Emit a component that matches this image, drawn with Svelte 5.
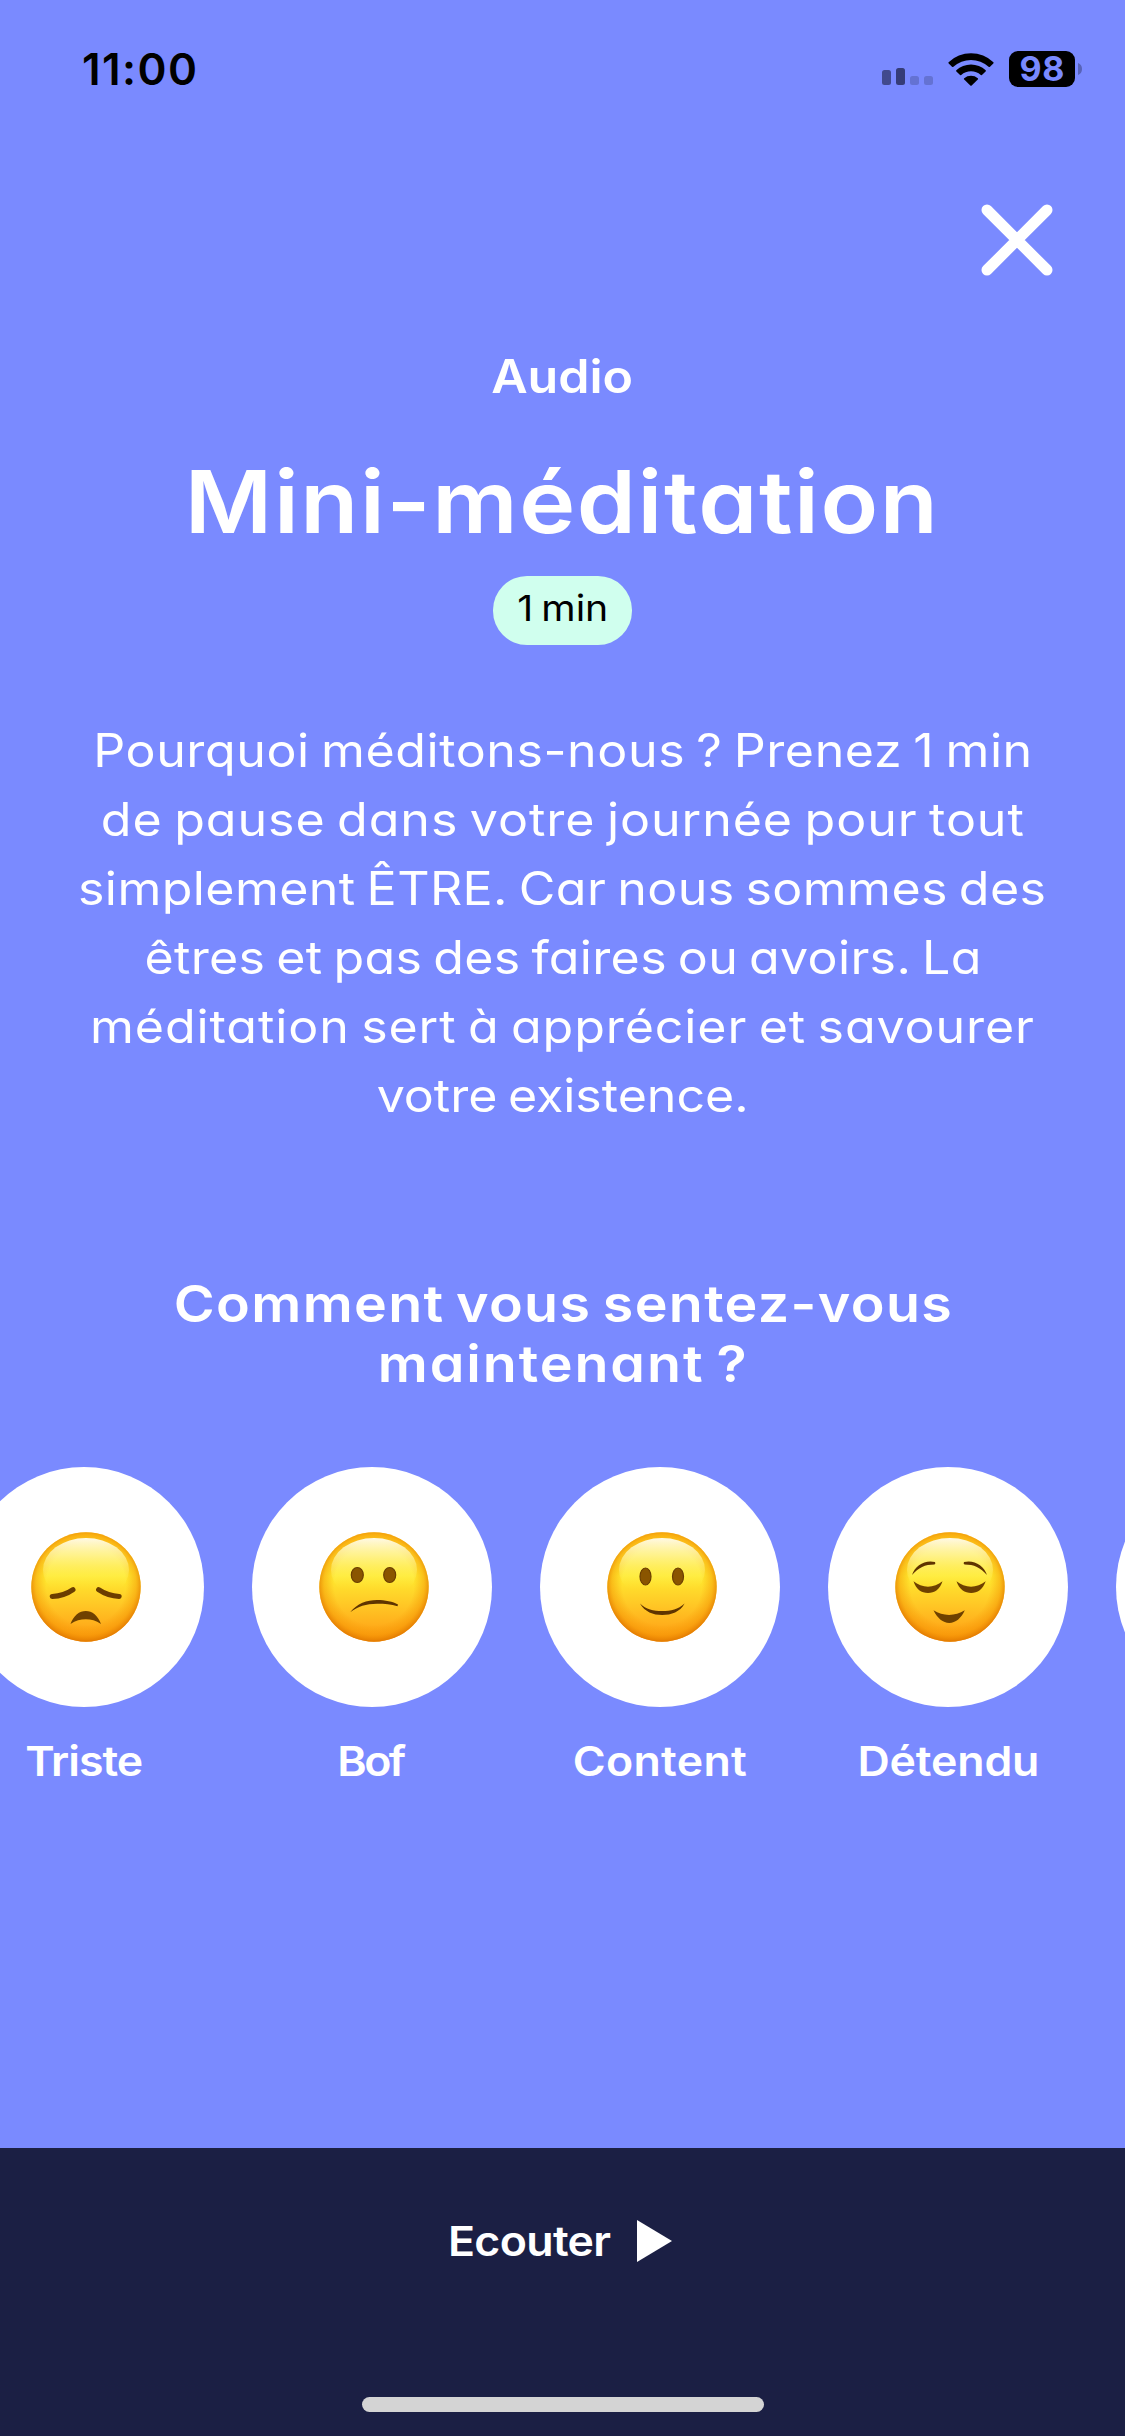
<script>
	// Width is how wide each line should be drawn, in px.
	const description = [
		{ text: 'Pourquoi méditons-nous ? Prenez 1 min', width: 939 },
		{ text: 'de pause dans votre journée pour tout', width: 923 },
		{ text: 'simplement ÊTRE. Car nous sommes des', width: 968 },
		{ text: 'êtres et pas des faires ou avoirs. La', width: 837 },
		{ text: 'méditation sert à apprécier et savourer', width: 944 },
		{ text: 'votre existence.', width: 372 }
	];

	const question = [
		{ text: 'Comment vous sentez-vous', width: 778 },
		{ text: 'maintenant ?', width: 369 }
	];

	const moods = [
		{ id: 'sad', label: 'Triste', width: 118 },
		{ id: 'meh', label: 'Bof', width: 69 },
		{ id: 'happy', label: 'Content', width: 174 },
		{ id: 'relaxed', label: 'Détendu', width: 182 },
		{ id: 'next', label: '', width: 0 }
	];

	// Spreads the letters of a single line until it is `width` wide.
	function track(node, width) {
		const count = node.textContent.length;
		if (count < 2) return;
		const drawn = node.getBoundingClientRect().width;
		const stretch = new DOMMatrix(getComputedStyle(node).transform).a;
		const spacing = (width - drawn) / (count - 1) / stretch;
		node.style.letterSpacing = `${spacing}px`;
		node.style.marginRight = `${-spacing}px`;
	}
</script>

<div class="screen">
	<header class="status-bar">
		<span class="time"><span class="line" use:track={115}>11:00</span></span>
		<div class="status-icons">
			<svg class="signal" viewBox="0 0 51 17">
				<rect x="0" y="2" width="9" height="15" rx="2.5" fill="#414a8e" />
				<rect x="14" y="0" width="9" height="17" rx="2.5" fill="#353c78" />
				<rect x="28" y="8" width="9" height="9" rx="2.5" fill="#6472d3" />
				<rect x="42" y="8" width="9" height="9" rx="2.5" fill="#6472d3" />
			</svg>
			<svg class="wifi" viewBox="0 0 46 33">
				<path d="M0.6 9.2 A32.5 32.5 0 0 1 45.4 9.2 Q45.9 9.9 45.3 10.5 L42 13.8 Q41.3 14.4 40.6 13.8 A26 26 0 0 0 5.4 13.8 Q4.7 14.4 4 13.8 L0.7 10.5 Q0.1 9.9 0.6 9.2Z" />
				<path d="M8.3 17.2 A21.5 21.5 0 0 1 37.7 17.2 Q38.2 17.9 37.6 18.5 L34.2 21.8 Q33.5 22.4 32.8 21.9 A15 15 0 0 0 13.2 21.9 Q12.5 22.4 11.8 21.8 L8.4 18.5 Q7.8 17.9 8.3 17.2Z" />
				<path d="M16.2 25.2 A10.8 10.8 0 0 1 29.8 25.2 Q30.4 25.9 29.8 26.5 L23.7 32.5 Q23 33.1 22.3 32.5 L16.2 26.5 Q15.6 25.9 16.2 25.2Z" />
			</svg>
			<div class="battery">
				<span class="battery-level"><span class="line" use:track={45}>98</span></span>
				<svg class="battery-cap" viewBox="0 0 4 12">
					<path d="M0 0 Q4 1.5 4 6 Q4 10.5 0 12Z" />
				</svg>
			</div>
		</div>
	</header>

	<main>
		<button class="close" aria-label="Fermer">
			<svg viewBox="0 0 72 72">
				<path d="M6 6 L66 66 M66 6 L6 66" />
			</svg>
		</button>

		<p class="kind"><span class="line wide" use:track={142}>Audio</span></p>
		<h1><span class="line wide" use:track={753}>Mini-méditation</span></h1>
		<span class="duration"><span class="line wide" use:track={91}>1 min</span></span>

		<p class="description">
			{#each description as row}
				<span class="row"><span class="line wide" use:track={row.width}>{row.text}</span></span>
			{/each}
		</p>

		<h2>
			{#each question as row}
				<span class="row"><span class="line wide" use:track={row.width}>{row.text}</span></span>
			{/each}
		</h2>

		<div class="moods">
			{#each moods as mood}
				<div class="mood">
					<div class="bubble">
						{#if mood.label}
							<svg class="face" viewBox="0 0 110 110">
								<defs>
									<linearGradient id="skin-{mood.id}" x1="0" y1="0" x2="0" y2="1">
										<stop offset="0" stop-color="#ffc81c" />
										<stop offset="0.2" stop-color="#ffe12e" />
										<stop offset="0.4" stop-color="#ffea30" />
										<stop offset="0.65" stop-color="#ffc926" />
										<stop offset="0.85" stop-color="#ffae1b" />
										<stop offset="1" stop-color="#fb9a0e" />
									</linearGradient>
									<radialGradient id="rim-{mood.id}" cx="0.5" cy="0.48" r="0.52">
										<stop offset="0.7" stop-color="#f59200" stop-opacity="0" />
										<stop offset="0.88" stop-color="#f39000" stop-opacity="0.45" />
										<stop offset="1" stop-color="#df7600" stop-opacity="0.9" />
									</radialGradient>
									<linearGradient id="shine-{mood.id}" x1="0" y1="0" x2="0" y2="1">
										<stop offset="0" stop-color="#fffdf0" stop-opacity="0.95" />
										<stop offset="0.3" stop-color="#fffab0" stop-opacity="0.65" />
										<stop offset="0.8" stop-color="#fff04a" stop-opacity="0" />
									</linearGradient>
								</defs>
								<circle cx="55" cy="55" r="54.7" fill="url(#skin-{mood.id})" />
								<circle cx="55" cy="55" r="54.7" fill="url(#rim-{mood.id})" />
								<ellipse cx="55" cy="38" rx="43" ry="32" fill="url(#shine-{mood.id})" />
								{#if mood.id === 'sad'}
									<path class="stroke" d="M21.2 64.4 Q33 64 42 57.6 M67.6 57.6 Q77 64 88.2 64.4" />
									<path class="ink" d="M39.5 92 C42.5 83.5 48.5 79 54.8 79 S67 83.5 70 92 C65 88.5 60 87.3 54.8 87.3 S44.5 88.5 39.5 92Z" />
								{:else if mood.id === 'meh'}
									<ellipse class="eye" cx="38.3" cy="43" rx="6" ry="7.5" />
									<ellipse class="eye" cx="70.7" cy="43" rx="6" ry="7.5" />
									<path class="dark" d="M31.2 80.3 C38 71.5 48 68 58 68 C66 68 74 69.5 79 72.5 L78.5 74.2 C72 72.3 66 71.8 58 71.8 C47 71.8 39 74.5 31.2 80.3Z" />
								{:else if mood.id === 'happy'}
									<ellipse class="eye" cx="38.5" cy="44.5" rx="5.5" ry="8.5" />
									<ellipse class="eye" cx="71" cy="44.5" rx="5.5" ry="8.5" />
									<path class="dark" d="M33 71.5 C38 80 46 83 55.2 83 S73 80 77.6 71.5 C71 77.5 64 79 55.2 79 S39 77.5 33 71.5Z" />
								{:else}
									<path class="dark" d="M17 43 C20 33.5 30 27.5 40 30 Q41 31.5 39.5 32.5 C30 32.5 23.5 35.5 17 43Z" />
									<path class="dark" d="M92 43 C89 33.5 79 27.5 69 30 Q68 31.5 69.5 32.5 C79 32.5 85.5 35.5 92 43Z" />
									<path class="ink" d="M18.5 49.3 C21 57.5 26.5 61 33 61 S45 57.5 47.5 49.3 C39 56.5 27 56.5 18.5 49.3Z" />
									<path class="ink" d="M61.5 49.3 C64 57.5 70 61 76.2 61 S88 57.5 90.7 49.3 C82 56.5 70 56.5 61.5 49.3Z" />
									<path class="ink" d="M38.5 78.3 C42.5 86.5 48 91 54.3 91 S66 86.5 69.8 78.3 C60 84.5 48 84.5 38.5 78.3Z" />
								{/if}
							</svg>
						{/if}
					</div>
					<div class="mood-label"><span class="line wide" use:track={mood.width}>{mood.label}</span></div>
				</div>
			{/each}
		</div>
	</main>

	<footer>
		<button class="listen">
			<span class="line wide from-left" use:track={163}>Ecouter</span>
			<svg class="play" viewBox="0 0 35 42"><path d="M0 0 L35 21 L0 42Z" /></svg>
		</button>
		<div class="home-indicator"></div>
	</footer>
</div>

<style>
	:global(body) {
		margin: 0;
		background: #7a8aff;
	}

	.screen {
		display: flex;
		flex-direction: column;
		width: 1125px;
		height: 2436px;
		overflow: hidden;
		background: #7a8aff;
		color: #ffffff;
		font-family: 'Inter', 'Liberation Sans', sans-serif;
		font-feature-settings: 'cv11' 1;
	}

	svg {
		display: block;
		flex-shrink: 0;
	}

	button {
		padding: 0;
		border: 0;
		background: none;
		color: inherit;
		font-family: inherit;
		font-feature-settings: inherit;
	}

	p,
	h1,
	h2 {
		margin: 0;
	}

	.line {
		display: inline-block;
		white-space: nowrap;
	}

	.wide {
		transform: scaleX(1.09);
		word-spacing: -0.07em;
	}

	.from-left {
		transform-origin: left;
	}

	.row {
		display: block;
	}

	.status-bar {
		display: flex;
		justify-content: space-between;
		align-items: center;
		height: 138px;
		padding: 0 43px 0 82px;
		box-sizing: border-box;
		color: #000000;
	}

	.time {
		font-size: 44px;
		font-weight: 600;
	}

	.status-icons {
		display: flex;
		align-items: center;
	}

	.signal {
		width: 51px;
		height: 17px;
		margin: 15px 15px 0 0;
	}

	.wifi {
		width: 46px;
		height: 33px;
		margin-right: 15px;
	}

	.battery {
		display: flex;
		align-items: center;
		gap: 3px;
	}

	.battery-level {
		width: 66px;
		height: 36px;
		border-radius: 9px;
		background: #000000;
		color: #7a8aff;
		font-size: 34px;
		font-weight: 700;
		line-height: 36px;
		text-align: center;
	}

	.battery-cap {
		width: 4px;
		height: 12px;
		fill: #5763b8;
	}

	main {
		display: flex;
		flex: 1;
		flex-direction: column;
		align-items: center;
		text-align: center;
	}

	.close {
		align-self: flex-end;
		margin: 66px 72px 0 0;
	}

	.close svg {
		width: 72px;
		height: 72px;
		fill: none;
		stroke: #ffffff;
		stroke-width: 11;
		stroke-linecap: round;
	}

	.kind {
		margin-top: 70px;
		font-size: 46px;
		font-weight: 600;
		line-height: 60px;
	}

	h1 {
		margin: 41px 3px 0 0;
		font-size: 87px;
		font-weight: 640;
		line-height: 110px;
	}

	.duration {
		width: 139px;
		height: 69px;
		margin-top: 19px;
		border-radius: 34px;
		background: #d0ffee;
		color: #000000;
		font-size: 36px;
		line-height: 64px;
	}

	.description {
		margin-top: 71px;
		font-size: 46px;
		font-weight: 400;
		line-height: 69px;
	}

	h2 {
		margin-top: 144px;
		font-size: 51px;
		font-weight: 600;
		line-height: 60px;
	}

	.moods {
		display: flex;
		align-self: flex-start;
		gap: 48px;
		margin: 73px 0 0 -36px;
	}

	.mood {
		width: 240px;
	}

	.bubble {
		display: flex;
		align-items: center;
		justify-content: center;
		height: 240px;
		padding-left: 4px;
		box-sizing: border-box;
		border-radius: 50%;
		background: #ffffff;
	}

	.face {
		width: 110px;
		height: 110px;
	}

	.stroke {
		fill: none;
		stroke: #6b3e00;
		stroke-width: 5;
		stroke-linecap: round;
	}

	.ink {
		fill: #6f4100;
	}

	.dark {
		fill: #5f3400;
	}

	.eye {
		fill: #8a5500;
		stroke: #6b3e00;
		stroke-width: 1.2;
	}

	.mood-label {
		margin-top: 24px;
		font-size: 41px;
		font-weight: 600;
		line-height: 60px;
	}

	footer {
		display: flex;
		flex-direction: column;
		align-items: center;
		height: 288px;
		padding-top: 63px;
		box-sizing: border-box;
		background: #1b1f44;
	}

	.listen {
		display: flex;
		align-items: center;
		gap: 39px;
		height: 60px;
		margin-right: 5px;
		font-size: 41px;
		font-weight: 600;
		line-height: 60px;
	}

	.play {
		width: 35px;
		height: 42px;
		fill: #ffffff;
	}

	.home-indicator {
		width: 402px;
		height: 15px;
		margin-top: 126px;
		border-radius: 8px;
		background: #d4d4d4;
	}
</style>
